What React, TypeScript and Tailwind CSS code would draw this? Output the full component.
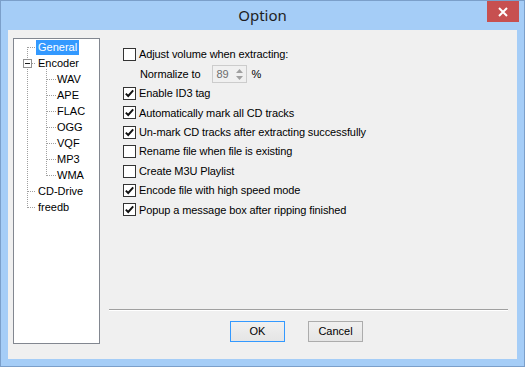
import React from 'react';

const tahoma = { fontFamily: '"Liberation Sans", Arial, sans-serif' };

const options = [
    { label: 'Adjust volume when extracting:', checked: false },
    { label: 'normalize', checked: false },
    { label: 'Enable ID3 tag', checked: true },
    { label: 'Automatically mark all CD tracks', checked: true },
    { label: 'Un-mark CD tracks after extracting successfully', checked: true },
    { label: 'Rename file when file is existing', checked: false },
    { label: 'Create M3U Playlist', checked: false },
    { label: 'Encode file with high speed mode', checked: true },
    { label: 'Popup a message box after ripping finished', checked: true },
];

const treeItems = [
    { label: 'General', depth: 0, selected: true },
    { label: 'Encoder', depth: 0 },
    { label: 'WAV', depth: 1 },
    { label: 'APE', depth: 1 },
    { label: 'FLAC', depth: 1 },
    { label: 'OGG', depth: 1 },
    { label: 'VQF', depth: 1 },
    { label: 'MP3', depth: 1 },
    { label: 'WMA', depth: 1 },
    { label: 'CD-Drive', depth: 0 },
    { label: 'freedb', depth: 0 },
];

function CheckBox({ checked }: { checked: boolean }) {
    return (
        <span className="w-[13px] h-[13px] border border-[#333333] bg-white flex items-center justify-center shrink-0">
            {checked && (
                <svg width="11" height="11" viewBox="0 0 11 11">
                    <path d="M1.8 5.6 L4.2 8 L9.2 2.4" fill="none" stroke="#111" strokeWidth="1.9" />
                </svg>
            )}
        </span>
    );
}

function TreeLines() {
    // dotted connectors, coordinates relative to tree inner box
    const dot = { stroke: '#a0a0a0', strokeDasharray: '1 1', strokeWidth: 1 };
    const rootRows = [0, 9, 10];
    const childRows = [2, 3, 4, 5, 6, 7, 8];
    return (
        <svg className="absolute left-0 top-0" width="85" height="200" shapeRendering="crispEdges">
            <line x1="13.5" y1="8" x2="13.5" y2="20" {...dot} />
            <line x1="13.5" y1="28" x2="13.5" y2="169" {...dot} />
            {rootRows.map((r) => (
                <line key={r} x1="14" y1={8.5 + r * 16} x2="22" y2={8.5 + r * 16} {...dot} />
            ))}
            <line x1="18" y1="24.5" x2="22" y2="24.5" {...dot} />
            <line x1="32.5" y1="30" x2="32.5" y2="137" {...dot} />
            {childRows.map((r) => (
                <line key={r} x1="33" y1={8.5 + r * 16} x2="42" y2={8.5 + r * 16} {...dot} />
            ))}
            <rect x="9.5" y="20.5" width="8" height="8" fill="white" stroke="#919191" />
            <line x1="11" y1="24.5" x2="16" y2="24.5" stroke="#1e1e1e" />
        </svg>
    );
}

function Tree() {
    return (
        <div className="ml-[5px] mt-[8px] w-[87px] h-[306px] border border-[#828790] bg-white relative text-[11px] text-black" style={tahoma}>
            <TreeLines />
            <div className="relative flex flex-col">
                {treeItems.map((item) => (
                    <div key={item.label} className={'h-4 flex items-center ' + (item.depth === 0 ? 'pl-[22px]' : 'pl-[41px]')}>
                        <span className={'px-[2px] h-[15px] flex items-center ' + (item.selected ? 'bg-[#3399ff] text-white' : '')}>
                            {item.label}
                        </span>
                    </div>
                ))}
            </div>
        </div>
    );
}

function SpinBox() {
    return (
        <div className="ml-[11px] h-[18px] w-[35px] border border-[#cccccc] bg-[#f0f0f0] flex">
            <span className="flex-1 flex items-center pl-[4px] text-[#6d6d6d]">89</span>
            <span className="w-[12px] flex flex-col items-center justify-center gap-[3px]">
                <svg width="7" height="4" viewBox="0 0 7 4"><path d="M0 4 L3.5 0 L7 4 Z" fill="#a0a0a0" /></svg>
                <svg width="7" height="4" viewBox="0 0 7 4"><path d="M0 0 L3.5 4 L7 0 Z" fill="#a0a0a0" /></svg>
            </span>
        </div>
    );
}

export default function App() {
    return (
        <div className="w-[525px] h-[367px] border border-[#7b9fca] bg-[#a5cdf7] flex flex-col relative">
            <div className="h-[29px] flex items-center justify-center">
                <span className="text-[15px] text-[#1e1e1e] -mt-[1px]" style={{ fontFamily: '"Noto Sans", "Open Sans", sans-serif' }}>
                    Option
                </span>
                <div className="absolute right-[5px] top-0 w-[32px] h-[21px] bg-[#c75050] flex items-center justify-center">
                    <svg width="10" height="10" viewBox="0 0 10 10">
                        <path d="M1 1 L9 9 M9 1 L1 9" stroke="white" strokeWidth="2" />
                    </svg>
                </div>
            </div>
            <div className="mx-[7px] mb-[7px] flex-1 bg-[#f0f0f0] flex text-[11px] text-black" style={tahoma}>
                <Tree />
                <div className="ml-[9px] mr-[9px] flex-1 flex flex-col">
                    <div className="pt-[15px] pl-[14px] flex flex-col tracking-[-0.1px]">
                        {options.map((opt) =>
                            opt.label === 'normalize' ? (
                                <div key={opt.label} className="h-[19.4px] flex items-center pl-[17px]">
                                    <span>Normalize to</span>
                                    <SpinBox />
                                    <span className="ml-[5px]">%</span>
                                </div>
                            ) : (
                                <div key={opt.label} className="h-[19.4px] flex items-center gap-[3px]">
                                    <CheckBox checked={opt.checked} />
                                    <span>{opt.label}</span>
                                </div>
                            )
                        )}
                    </div>
                    <div className="flex-1" />
                    <div className="h-[2px] border-t border-[#a0a0a0] border-b border-b-white" />
                    <div className="mt-[10px] mb-[17px] h-[21px] flex gap-[23px] pl-[121px]">
                        <button className="w-[55px] h-[21px] border border-[#3399ff] bg-gradient-to-b from-[#f0f0f0] to-[#e5e5e5] text-[11px]">
                            OK
                        </button>
                        <button className="w-[55px] h-[21px] border border-[#acacac] bg-gradient-to-b from-[#f0f0f0] to-[#e5e5e5] text-[11px]">
                            Cancel
                        </button>
                    </div>
                </div>
            </div>
        </div>
    );
}
